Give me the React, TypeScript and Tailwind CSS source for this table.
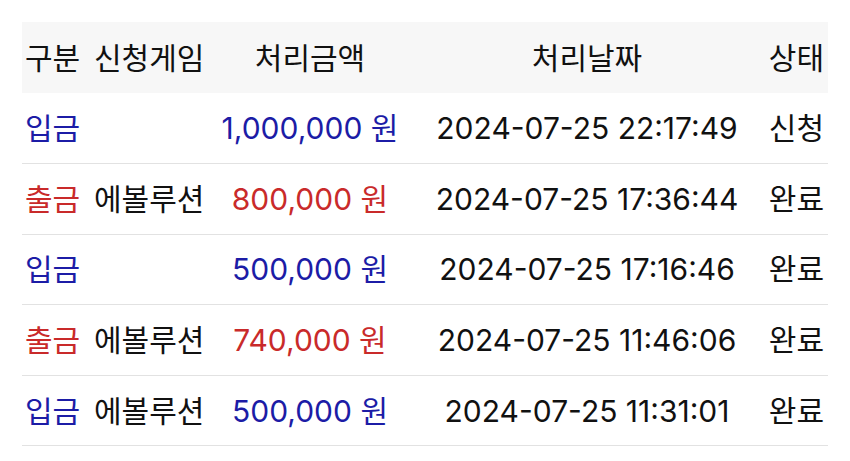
const rows = [
  { type: "입금", game: "", amount: "1,000,000 원", date: "2024-07-25 22:17:49", status: "신청" },
  { type: "출금", game: "에볼루션", amount: "800,000 원", date: "2024-07-25 17:36:44", status: "완료" },
  { type: "입금", game: "", amount: "500,000 원", date: "2024-07-25 17:16:46", status: "완료" },
  { type: "출금", game: "에볼루션", amount: "740,000 원", date: "2024-07-25 11:46:06", status: "완료" },
  { type: "입금", game: "에볼루션", amount: "500,000 원", date: "2024-07-25 11:31:01", status: "완료" },
];

const App = () => {
  return (
    <div
      className="w-[850px] h-[461px] bg-white pt-[22px] px-[22px] text-[30px] leading-none text-[#111]"
      style={{ fontFamily: 'Inter, "Noto Sans CJK KR", sans-serif' }}
    >
      <table className="w-[806px] table-fixed border-collapse">
        <colgroup>
          <col className="w-[66px]" />
          <col className="w-[124px]" />
          <col className="w-[196px]" />
          <col className="w-[358px]" />
          <col className="w-[62px]" />
        </colgroup>
        <thead>
          <tr className="bg-[#f7f7f7] h-[71px]">
            <th className="font-normal text-left pl-[3px] whitespace-nowrap">구분</th>
            <th className="font-normal text-left pl-[6px] whitespace-nowrap">신청게임</th>
            <th className="font-normal text-center whitespace-nowrap">처리금액</th>
            <th className="font-normal text-center whitespace-nowrap">처리날짜</th>
            <th className="font-normal text-right pr-[4px] whitespace-nowrap">상태</th>
          </tr>
        </thead>
        <tbody>
          {rows.map((r, i) => {
            const color = r.type === "입금" ? "text-[#1c1ca6]" : "text-[#c92a2a]";
            return (
              <tr key={i} className="h-[70.6px] border-b border-[#e2e2e2]">
                <td className={`pl-[3px] whitespace-nowrap ${color}`}>{r.type}</td>
                <td className="pl-[6px] whitespace-nowrap">{r.game}</td>
                <td className={`text-center whitespace-nowrap ${color}`}>{r.amount}</td>
                <td className="text-center whitespace-nowrap">{r.date}</td>
                <td className="text-right pr-[4px] whitespace-nowrap">{r.status}</td>
              </tr>
            );
          })}
        </tbody>
      </table>
    </div>
  );
};

export default App;
